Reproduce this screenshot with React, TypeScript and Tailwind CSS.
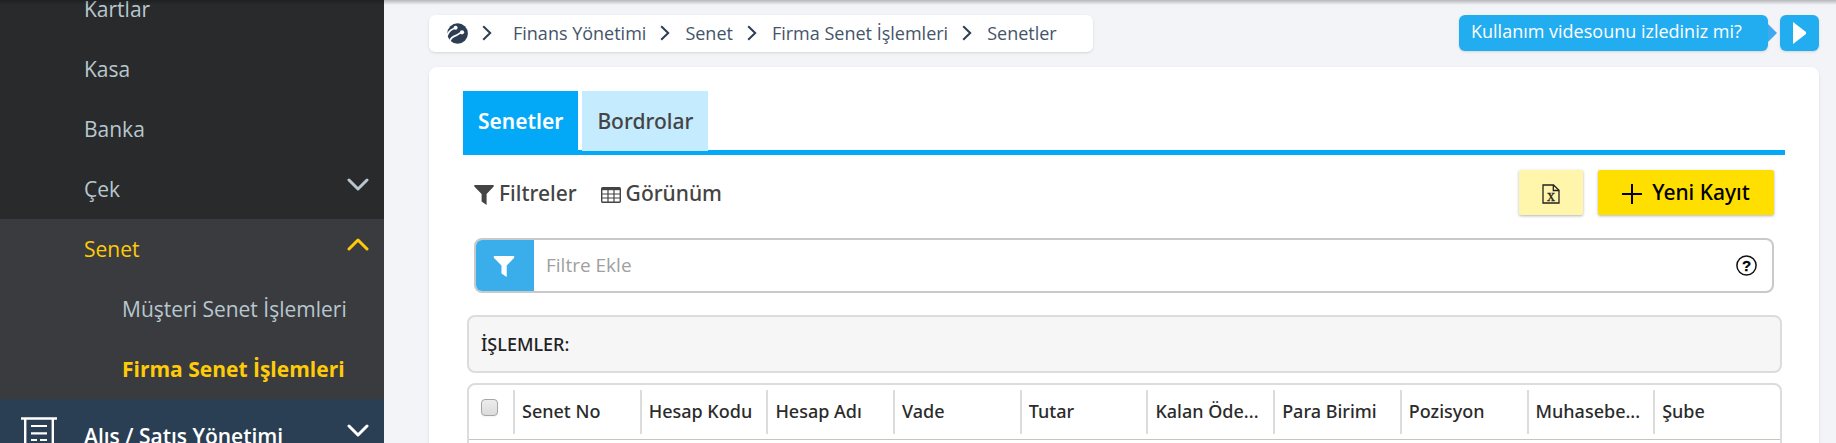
import type { ReactNode } from "react";
import { clsx } from "clsx";

const MENU = ["Kartlar", "Kasa", "Banka", "Çek"];

const BREADCRUMBS = ["Finans Yönetimi", "Senet", "Firma Senet İşlemleri", "Senetler"];

const COLUMNS = [
    "Senet No",
    "Hesap Kodu",
    "Hesap Adı",
    "Vade",
    "Tutar",
    "Kalan Öde...",
    "Para Birimi",
    "Pozisyon",
    "Muhasebe...",
    "Şube",
];

function Chevron({ up = false }: { up?: boolean }) {
    return (
        <svg
            viewBox="0 0 22 13"
            className={clsx("mb-3 h-[13px] w-[22px] shrink-0", up && "rotate-180")}
            fill="none"
            stroke="currentColor"
            strokeWidth="3"
            strokeLinecap="round"
            strokeLinejoin="round"
            aria-hidden="true"
        >
            <path d="M2 2l9 9 9-9" />
        </svg>
    );
}

function CrumbArrow() {
    return (
        <svg viewBox="0 0 10 16" className="h-4 w-[10px] shrink-0" fill="none" stroke="#2d3e54" strokeWidth="2" aria-hidden="true">
            <path d="M1.2 1.2 8.2 8l-7 6.8" />
        </svg>
    );
}

function Logo() {
    return (
        <svg viewBox="0 0 21 21" className="size-[21px]" aria-hidden="true">
            <circle cx="10.6" cy="10.5" r="10.3" fill="#2d3e54" />
            <g fill="none" stroke="#fff" strokeLinecap="round">
                <path d="M0 12.6C1.6 8.6 4.4 6 8.4 5" strokeWidth="1.7" />
                <path d="M2.6 18.6C3.6 14.4 6.4 13.4 9.2 12.4c2.400-1 3-2.600 5.800-2.700" strokeWidth="1.8" />
            </g>
            <circle cx="8.6" cy="4.8" r="2" fill="#fff" />
            <circle cx="15" cy="9.3" r="2.1" fill="#fff" />
        </svg>
    );
}

function Funnel({ className }: { className: string }) {
    return (
        <svg viewBox="0 0 20 20" className={className} fill="currentColor" aria-hidden="true">
            <path d="M.3 0h19.4v1.6L12.6 9v11l-5-3.4V9L.3 1.6z" />
        </svg>
    );
}

function GridIcon() {
    return (
        <svg viewBox="0 0 20 16" className="mt-0.5 h-4 w-5" fill="none" stroke="currentColor" aria-hidden="true">
            <rect x=".7" y=".7" width="18.6" height="14.6" rx="1" strokeWidth="1.4" />
            <path d="M1 2h18" strokeWidth="2.4" />
            <path d="M7 2v13M13 2v13M1 7h18M1 11h18" strokeWidth="1.2" />
        </svg>
    );
}

function ExcelIcon() {
    return (
        <svg viewBox="0 0 18 20" className="mt-0.5 h-5 w-[18px]" fill="none" stroke="#222" strokeWidth="1.3" aria-hidden="true">
            <path d="M1 1h10.5L17 6.3V19H1z" />
            <path d="M11.3 1v5.5H17" />
            <text x="9" y="17" textAnchor="middle" fontSize="16" fontFamily="Liberation Serif, serif" fill="#222" strokeWidth=".3">
                x
            </text>
        </svg>
    );
}

function ReceiptIcon() {
    return (
        <svg viewBox="0 0 36 40" className="h-10 w-9" fill="none" stroke="#fff" strokeWidth="2.4" aria-hidden="true">
            <path d="M0 1.5h36M4.2 2v36M31.8 2v36" />
            <path d="M10 9h16M10 16.3h16M10 23h6M19 23h7M10 30h16" strokeWidth="2.2" />
            <path d="m4 38 5-4 4.5 4 4.5-4 4.5 4 4.5-4 5 4" />
        </svg>
    );
}

function MenuLink({ children, className }: { children: ReactNode; className?: string }) {
    return (
        <a href="#" className={clsx("flex h-[60px] items-center justify-between pt-0.5 pr-[15px]", className)}>
            {children}
        </a>
    );
}

function Sidebar() {
    return (
        <nav className="-mt-[21px] w-96 shrink-0 bg-[#292a2c] text-[21px] text-[#b8c7ce]">
            {MENU.map((item) => (
                <MenuLink key={item} className="pl-[84px]">
                    {item}
                    {item === "Çek" && <Chevron />}
                </MenuLink>
            ))}
            <div className="bg-[#3a3b3f]">
                <MenuLink className="pl-[84px] text-[#ffcb08]">
                    Senet
                    <Chevron up />
                </MenuLink>
                <MenuLink className="pl-[122px]">Müşteri Senet İşlemleri</MenuLink>
                <MenuLink className="pl-[122px] font-bold text-[#ffcb08]">Firma Senet İşlemleri</MenuLink>
            </div>
            <a href="#" className="flex h-[75px] items-center bg-[#2a3f54] pr-[15px] pl-[21px] font-semibold text-white">
                <ReceiptIcon />
                <span className="ml-[27px] flex-1">Alış / Satış Yönetimi</span>
                <Chevron />
            </a>
        </nav>
    );
}

function TopBar() {
    return (
        <div className="flex items-start justify-between">
            <ol className="flex h-[37px] w-[664px] items-center rounded-md bg-white pl-[18px] text-lg text-[#44546a] shadow-sm">
                <li>
                    <a href="#" aria-label="Ana sayfa">
                        <Logo />
                    </a>
                </li>
                {BREADCRUMBS.map((crumb, index) => (
                    <li key={crumb} className={clsx("ml-[14px] flex items-center pb-0.5", index === 0 ? "gap-[21px]" : "gap-[15px]")}>
                        <CrumbArrow />
                        <a href="#">{crumb}</a>
                    </li>
                ))}
            </ol>
            <div className="flex items-center">
                <a href="#" className="flex h-9 w-[309px] items-center rounded-md bg-[#23adf1] pb-1 pl-3 text-lg text-white shadow-sm">
                    Kullanım videsounu izlediniz mi?
                </a>
                <svg viewBox="0 0 9 18" className="mr-[3px] h-[18px] w-[9px]" fill="#3fa9f0" aria-hidden="true">
                    <path d="M0 0l9 9-9 9z" />
                </svg>
                <button className="flex h-9 w-[39px] items-center justify-center rounded-md bg-[#23adf1] shadow-sm" aria-label="Videoyu oynat">
                    <svg viewBox="0 0 13 22" className="h-[22px] w-[13px]" fill="#fff" aria-hidden="true">
                        <path d="M0 0l13 10v2L0 22z" />
                    </svg>
                </button>
            </div>
        </div>
    );
}

function Tabs() {
    return (
        <div className="flex h-16 items-start gap-1 border-b-[5px] border-[#03a9f7] text-[21px]" role="tablist">
            <button role="tab" aria-selected="true" className="h-[60px] bg-[#03a9f7] px-[15px] pt-0.5 font-semibold text-white">
                Senetler
            </button>
            <button role="tab" aria-selected="false" className="h-[60px] bg-[#c5ebff] px-[15px] pt-0.5 font-medium text-[#444]">
                Bordrolar
            </button>
        </div>
    );
}

function Toolbar() {
    return (
        <div className="mx-[11px] mt-[15px] flex h-[45px] items-center text-[21px]">
            <button className="flex items-center gap-[5px] pt-0.5 font-medium text-[#444]">
                <Funnel className="mt-0.5 size-5" />
                Filtreler
            </button>
            <button className="ml-6 flex items-center gap-[5px] pt-0.5 font-medium text-[#444]">
                <GridIcon />
                Görünüm
            </button>
            <button className="ml-auto flex h-full w-16 items-center justify-center rounded-xs bg-[#fff5ab] shadow-[0_1px_3px_rgba(0,0,0,0.3)]" aria-label="Excel">
                <ExcelIcon />
            </button>
            <button className="ml-[15px] flex h-full w-44 items-center justify-center gap-[10px] rounded-xs bg-[#ffdf00] font-medium text-black shadow-[0_1px_3px_rgba(0,0,0,0.3)]">
                <svg viewBox="0 0 20 20" className="mt-0.5 size-5" stroke="currentColor" strokeWidth="2" aria-hidden="true">
                    <path d="M0 10h20M10 0v20" />
                </svg>
                Yeni Kayıt
            </button>
        </div>
    );
}

function FilterBox() {
    return (
        <div className="mx-[11px] mt-[23px] flex h-[55px] overflow-hidden rounded-lg border-2 border-[#c9c9c9]">
            <button className="flex w-[58px] items-center justify-center bg-[#3aaeea] pr-0.5 text-white" aria-label="Filtrele">
                <Funnel className="mt-0.5 h-[21px] w-[22px]" />
            </button>
            <input
                type="text"
                aria-label="Filtre Ekle"
                placeholder="Filtre Ekle"
                className="flex-1 px-3 font-['Open_Sans',sans-serif] text-[19px] outline-none placeholder:text-[#a0a0a0]"
            />
            <button className="mr-[15px]" aria-label="Yardım">
                <svg viewBox="0 0 21 21" className="size-[21px]" fill="none" aria-hidden="true">
                    <circle cx="10.5" cy="10.5" r="9.6" stroke="#111" strokeWidth="1.5" />
                    <text x="10.5" y="15.8" textAnchor="middle" fontSize="15" fontWeight="700" fontFamily="Liberation Sans, sans-serif" fill="#000" stroke="#000" strokeWidth=".3">
                        ?
                    </text>
                </svg>
            </button>
        </div>
    );
}

function Grid() {
    return (
        <div className="mt-[10px] mr-[3px] ml-1 h-24 overflow-hidden rounded-lg border-2 border-[#dcdcdc]">
            <table className="w-full table-fixed border-separate border-spacing-0 text-lg text-[#2b2b2b]">
                <thead>
                    <tr>
                        <th className="h-[55px] w-11 border-b border-[#c8c6bc] p-0">
                            <input
                                type="checkbox"
                                aria-label="Tümünü seç"
                                className="mb-[10px] ml-3 block size-[17px] appearance-none rounded-sm border border-[#a6a6a6] bg-linear-to-b from-[#ececec] to-[#dcdcdc] shadow-xs"
                            />
                        </th>
                        {COLUMNS.map((column) => (
                            <th key={column} className="h-[55px] border-b border-[#c8c6bc] p-0 text-left font-medium">
                                <div className="h-11 truncate border-l-2 border-[#dcdcdc] pr-2 pl-[7px] leading-[42px]">{column}</div>
                            </th>
                        ))}
                    </tr>
                </thead>
            </table>
        </div>
    );
}

export default function App() {
    return (
        <div className="relative flex h-screen overflow-hidden bg-[#f3f4f8] font-['Open_Sans',sans-serif]">
            <Sidebar />
            <main className="min-w-0 flex-1 pt-[15px] pr-[17px] pl-[45px]">
                <TopBar />
                <section className="mt-[15px] rounded-lg bg-white px-[34px] pt-6 font-['Noto_Sans',sans-serif] shadow-sm">
                    <Tabs />
                    <Toolbar />
                    <FilterBox />
                    <div className="mt-[22px] mr-[3px] ml-1 flex h-[58px] items-center rounded-lg border-2 border-[#dcdcdc] bg-[#f6f6f6] px-3 text-lg font-medium text-[#222]">
                        İŞLEMLER:
                    </div>
                    <Grid />
                </section>
            </main>
            <div className="pointer-events-none absolute inset-x-0 top-0 h-[5px] bg-linear-to-b from-black/25 to-transparent" />
        </div>
    );
}
